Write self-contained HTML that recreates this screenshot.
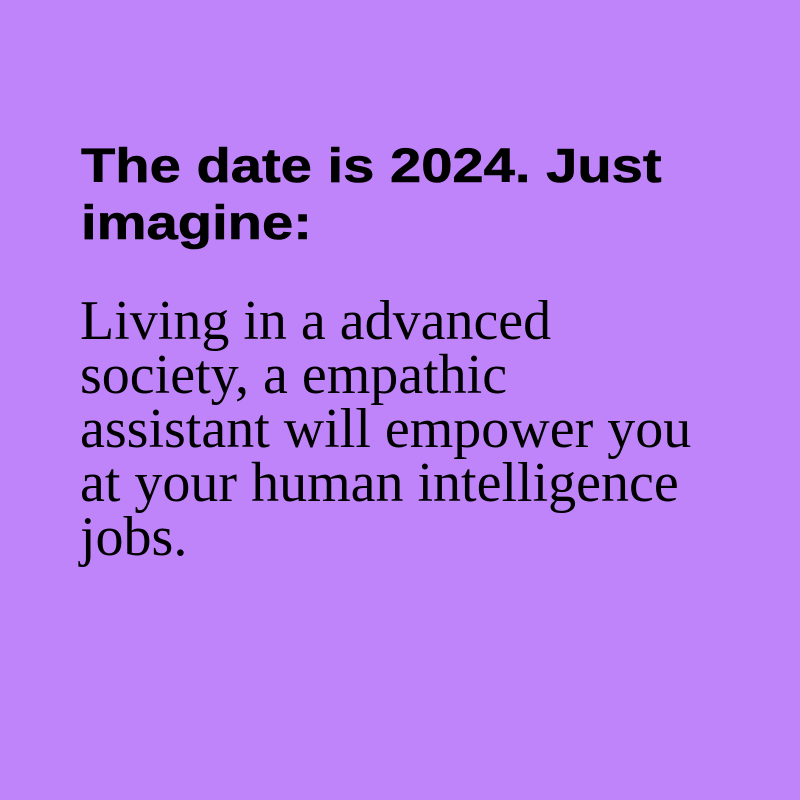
<!DOCTYPE html>
<html><head><meta charset="utf-8"><style>
html,body{margin:0;padding:0;width:800px;height:800px;background:#c084fa;overflow:hidden}
h1{position:absolute;left:81px;top:138px;width:560px;margin:0;font:bold 48px/57px "Liberation Sans",sans-serif;color:#000;transform:scaleX(1.17);transform-origin:0 0;-webkit-text-stroke:0.6px #000}
p{position:absolute;left:80px;top:294px;width:622px;margin:0;font:56px/54px "Liberation Serif",serif;color:#000}
</style></head><body>
<h1>The date is 2024. Just imagine:</h1>
<p>Living in a advanced society, a empathic assistant will empower you at your human intelligence jobs.</p>
</body></html>
